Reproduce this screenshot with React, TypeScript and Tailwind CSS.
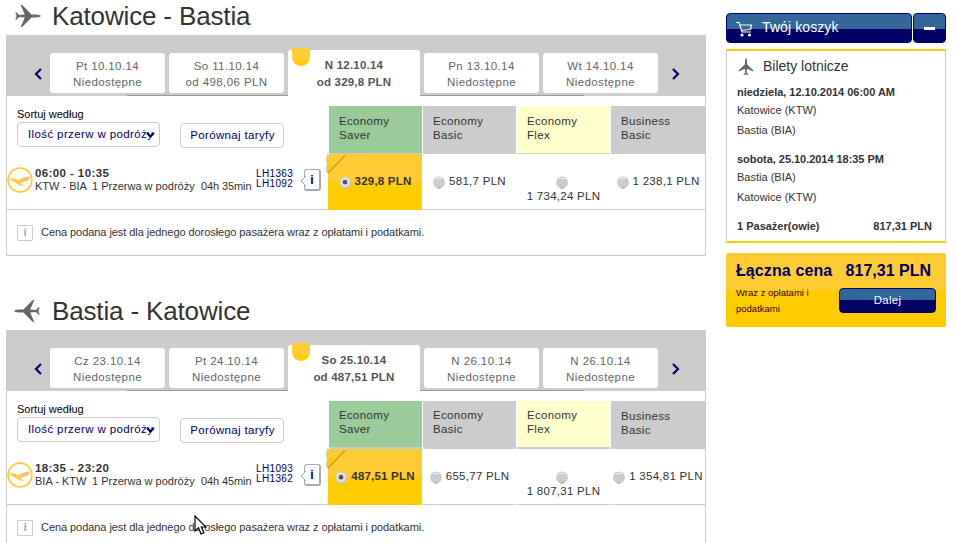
import React from 'react';
import clsx from 'clsx';

type Fare = { price: string; stacked?: boolean };

type Flight = {
  title: string;
  reverse?: boolean;
  days: string[][];
  time: string;
  route: string;
  duration: string;
  numbers: string[];
  fares: Fare[];
};

const flights: Flight[] = [
  {
    title: 'Katowice - Bastia',
    days: [
      ['Pt 10.10.14', 'Niedostępne'],
      ['So 11.10.14', 'od 498,06 PLN'],
      ['N 12.10.14', 'od 329,8 PLN'],
      ['Pn 13.10.14', 'Niedostępne'],
      ['Wt 14.10.14', 'Niedostępne'],
    ],
    time: '06:00 - 10:35',
    route: 'KTW - BIA',
    duration: '04h 35min',
    numbers: ['LH1363', 'LH1092'],
    fares: [{ price: '329,8 PLN' }, { price: '581,7 PLN' }, { price: '1 734,24 PLN', stacked: true }, { price: '1 238,1 PLN' }],
  },
  {
    title: 'Bastia - Katowice',
    reverse: true,
    days: [
      ['Cz 23.10.14', 'Niedostępne'],
      ['Pt 24.10.14', 'Niedostępne'],
      ['So 25.10.14', 'od 487,51 PLN'],
      ['N 26.10.14', 'Niedostępne'],
      ['N 26.10.14', 'Niedostępne'],
    ],
    time: '18:35 - 23:20',
    route: 'BIA - KTW',
    duration: '04h 45min',
    numbers: ['LH1093', 'LH1362'],
    fares: [{ price: '487,51 PLN' }, { price: '655,77 PLN' }, { price: '1 807,31 PLN', stacked: true }, { price: '1 354,81 PLN' }],
  },
];

const classes = [
  { name: 'Economy', kind: 'Saver', color: 'bg-[#99cc99]' },
  { name: 'Economy', kind: 'Basic', color: 'bg-[#cccccc]' },
  { name: 'Economy', kind: 'Flex', color: 'bg-[#ffffcc]' },
  { name: 'Business', kind: 'Basic', color: 'bg-[#cccccc]' },
];

function Plane({ className }: { className?: string }) {
  return (
    <svg viewBox="0 0 27 24" className={className} fill="#666">
      <path d="M27 12c-.5-.8-2.500-1.400-4.500-1.500h-5L9.200 2 7.500.7 6.700 1l4.100 9.400-5.600.7-3-2.800-1 .1 1.600 3.200L1 12l1.800.4-1.600 3.200 1 .1 3-2.800 5.600.7L6.700 23l.8.3L9.200 22l8.300-8.500h5c2-.1 4-.7 4.500-1.500z" />
    </svg>
  );
}

function Arrow({ right }: { right?: boolean }) {
  return (
    <svg viewBox="0 0 8 12" className="h-3 w-2 shrink-0" fill="none" stroke="#000066" strokeWidth="2.2">
      <path d={right ? 'M1 1l5 5-5 5' : 'M7 1L2 6l5 5'} />
    </svg>
  );
}

function Crane() {
  return (
    <svg viewBox="0 0 26 26" className="h-[26px] w-[26px] shrink-0">
      <circle cx="13" cy="13" r="11.900" fill="#fff" stroke="#fc3" strokeWidth="1.700" />
      <path d="M3 11c4 .2 6 1.400 9 2.100 3-2.300 6-3.700 11.500-3.600l-1.200 2.500-2.300 1.900-3.500 1.100-2.800.4c-.5 1 .5 2 4 4-4.500 0-7-2-9-3.700C6.200 14.900 4 13.300 3 11z" fill="#fc3" />
      <path d="M14 12.800c3-1.900 5-2.900 9-2.900l-1 2-2 1.500-4 .8z" fill="#fdb98a" />
    </svg>
  );
}

function Radio({ checked }: { checked?: boolean }) {
  return (
    <svg viewBox="0 0 12 13" className="mr-1 inline-block h-[13px] w-3 align-[-4px]">
      {checked && <circle cx="6" cy="7" r="5.800" fill="#f93" />}
      <circle cx="6" cy="6.400" r="6" fill="#ccc" />
      {checked ? (
        <>
          <circle cx="6" cy="6.200" r="4.600" fill="#e4e4e4" />
          <circle cx="6" cy="6.200" r="2.400" fill="#555" />
        </>
      ) : (
        <>
          <path d="M3 2.500h6" stroke="#fff" strokeOpacity=".7" />
          <path d="M4.500 12h3" stroke="#999" />
        </>
      )}
    </svg>
  );
}

function DayTab({ day, active }: { day: string[]; active?: boolean }) {
  if (active) {
    return (
      <div className="relative h-[45px] w-[132px] shrink-0 rounded-t-[3px] bg-white pt-[7px] text-center text-[11.5px] leading-[17px] font-bold tracking-[0.2px] text-[#555]">
        <div className="absolute top-[-2px] left-1 h-[18px] w-[18px] rounded-b-full bg-linear-to-b from-[#ffcc33] from-65% to-[#ffcc00] to-65%" />
        {day.map((line) => <div key={line}>{line}</div>)}
      </div>
    );
  }
  return (
    <div className="mt-[3px] h-10 w-[115px] shrink-0 rounded-[3px] bg-white pt-[5px] text-center text-[11.5px] leading-4 tracking-[0.4px] text-[#666]">
      {day.map((line) => <div key={line}>{line}</div>)}
    </div>
  );
}

function FareCell({ fare, selected }: { fare: Fare; selected?: boolean }) {
  return (
    <div
      className={clsx(
        'relative h-14 border-b pt-5 text-center leading-[15px] whitespace-nowrap',
        selected
          ? '-ml-px border-[#ffcc00] bg-linear-to-b from-[#ffcc33] from-50% to-[#ffcc00] to-50% text-[11.5px] font-bold tracking-[0.2px]'
          : 'border-[#ccc] text-[11.5px] tracking-[0.27px]',
      )}
    >
      {selected && (
        <svg viewBox="0 0 20 21" className="absolute top-0 left-[-2px] h-[21px] w-5">
          <path d="M1 0h18L1 19z" fill="#fc3" />
          <path d="M1 10h8l-8 9z" fill="#fc0" />
          <path d="M.5 3v6M.5 12v6" stroke="#ccc" />
          <path d="M19 1.500L2 19" stroke="#c93" strokeWidth="1.500" />
        </svg>
      )}
      <Radio checked={selected} />
      {fare.stacked ? <div>{fare.price}</div> : <span>{fare.price}</span>}
    </div>
  );
}

function FlightSection({ flight }: { flight: Flight }) {
  return (
    <section className="h-[295px]">
      <h2 className="flex h-[35px] items-start pl-2 text-[26px] leading-8 tracking-[-0.15px] text-[#333]">
        <Plane className={clsx('mt-1 mr-[11px] h-6 w-[27px]', flight.reverse && '-scale-x-100')} />
        {flight.title}
      </h2>
      <div className="h-[221px] w-[700px] border-x border-b border-[#ccc]">
        <div className="-mx-px flex h-[60px] bg-[#ccc] pt-[15px]">
          <div className="flex w-11 items-center justify-end pt-[3px] pr-2">
            <Arrow />
          </div>
          <div className="flex gap-1">
            {flight.days.map((day, i) => <DayTab key={i} day={day} active={i === 2} />)}
          </div>
          <div className="flex items-center pt-[3px] pl-[14px]">
            <Arrow right />
          </div>
        </div>
        {/* Shadow under the inactive tabs, open below the active one */}
        <div className="-mx-px flex h-px bg-[#ccc] pl-[121px]">
          <div className="w-[161px] bg-[#999]" />
          <div className="w-[132px] bg-white" />
          <div className="w-[164px] bg-[#999]" />
        </div>

        <div className="flex">
          <div className="w-[322px]">
            <div className="flex h-[57px] pl-[10px] text-[#000066]">
              <div className="w-[163px] pt-3">
                <div className="h-[14px] text-[11px] leading-[13px] text-black">Sortuj według</div>
                <div className="relative flex h-[25px] w-[143px] items-center rounded-[4px] border border-[#ccc] pl-[10px] text-[11.5px] tracking-[0.38px] whitespace-nowrap">
                  Ilość przerw w podróży
                  <svg viewBox="0 0 9 6" className="absolute top-[9px] right-1 h-[6px] w-[9px]" fill="none" stroke="#000066" strokeWidth="2">
                    <path d="M1 1l3.500 3.500L8 1" />
                  </svg>
                </div>
              </div>
              <button className="mt-[27px] h-[25px] w-[104px] rounded-[4px] border border-[#ccc] pl-px text-[11.5px] tracking-[0.35px] whitespace-nowrap">
                Porównaj taryfy
              </button>
            </div>
            <div className="flex h-[57px] border-b border-[#ccc] text-[11px] text-[#333]">
              <div className="mt-[14px]">
                <Crane />
              </div>
              <div className="mt-[14px] ml-[2px] w-[221px] leading-[13px] whitespace-nowrap">
                <div className="text-[11.5px] font-bold tracking-[0.4px]">{flight.time}</div>
                <div className="flex">
                  <span className="w-[57px]">{flight.route}</span>
                  <span className="w-[109px]">1 Przerwa w podróży</span>
                  <span className="tracking-[-0.1px]">{flight.duration}</span>
                </div>
              </div>
              <div className="mt-4 w-11 text-[10px] leading-[10px] tracking-[0.35px] text-[#000066]">
                {flight.numbers.map((n) => <div key={n}>{n}</div>)}
              </div>
              <div className="relative mt-4 ml-1 h-[22px] w-[17px] rounded-[3px] border border-r-2 border-b-2 border-[#aaa] text-center text-[12px] leading-5 font-bold text-[#000066]">
                i
                <svg viewBox="0 0 6 10" className="absolute top-[6px] left-[-5px] h-[10px] w-[6px]">
                  <path d="M6 0L1 5l5 5" fill="#fff" stroke="#aaa" />
                </svg>
              </div>
            </div>
          </div>

          <div className="mt-[10px] grid h-[104px] w-[376px] grid-cols-[93px_93px_93px_94px] gap-x-px">
            {classes.map((c, i) => (
              <div
                key={i}
                className={clsx(
                  'h-12 border-b border-[#ccc] pl-[10px] text-[11.5px] leading-[14px] tracking-[0.35px] text-[#333]',
                  flight.reverse && i < 3 ? 'border-b-2 pt-[7px]' : 'pt-2',
                  c.color,
                )}
              >
                {c.name}
                <br />
                {c.kind}
              </div>
            ))}
            {flight.fares.map((fare, i) => (
              <div key={i} className="text-[#333]">
                <FareCell fare={fare} selected={i === 0} />
              </div>
            ))}
          </div>
        </div>

        <div className="flex h-[45px] items-center pl-[10px] text-[11px] tracking-[-0.06px] text-[#333]">
          <div className="mr-2 h-4 w-4 rounded-[1px] border border-[#ccc] text-center text-[10px] leading-[14px] font-bold text-[#999]">i</div>
          Cena podana jest dla jednego dorosłego pasażera wraz z opłatami i podatkami.
        </div>
      </div>
    </section>
  );
}

function Basket() {
  return (
    <aside className="w-[220px] pt-[13px] text-[11px] text-[#333]">
      <div className="flex h-[30px] gap-px text-white">
        <div className="flex w-[186px] items-center rounded-[4px] border border-[#000066] bg-linear-to-b from-[#336699] from-54% to-[#000066] to-54% pl-[9px] text-[14px]">
          <svg viewBox="0 0 17 16" className="mt-px mr-[9px] h-4 w-[17px]" fill="none" stroke="#fff" strokeWidth="1.200">
            <path d="M0 1.500h3l3 9.500h9M4 4h11.500l-1 4.500-9 .8" />
            <circle cx="6" cy="14" r="1" fill="#fff" />
            <circle cx="13.500" cy="14" r="1" fill="#fff" />
          </svg>
          <span className="-mt-[2px] tracking-[0.1px]">Twój koszyk</span>
        </div>
        <div className="flex w-[33px] items-center justify-center rounded-[4px] border border-[#000066] bg-linear-to-b from-[#336699] from-54% to-[#000066] to-54%">
          <div className="mt-px h-[3px] w-[11px] bg-white" />
        </div>
      </div>

      <div className="mt-[6px] h-[194px] border-x border-y-2 border-x-[#ccc] border-y-[#ffcc00] pr-[13px] pl-[10px]">
        <div className="flex h-[31px] items-center text-[14px]">
          <Plane className="mr-[8px] h-[16px] w-[18px] -rotate-90" />
          Bilety lotnicze
        </div>
        <div className="leading-5">
          <div className="h-[18px] font-bold tracking-[-0.02px]">niedziela, 12.10.2014 06:00 AM</div>
          <div>Katowice (KTW)</div>
          <div>Bastia (BIA)</div>
          <div className="mt-[9px] h-[18px] font-bold tracking-[-0.04px]">sobota, 25.10.2014 18:35 PM</div>
          <div>Bastia (BIA)</div>
          <div>Katowice (KTW)</div>
          <div className="mt-[9px] flex justify-between font-bold">
            <span>1 Pasażer(owie)</span>
            <span>817,31 PLN</span>
          </div>
        </div>
      </div>

      <div className="mt-[10px] h-[74px] rounded-[2px] bg-linear-to-b from-[#ffcc33] from-50% to-[#ffcc00] to-50% px-[10px] pt-2 text-[#000066]">
        <div className="flex justify-between pr-[5px] text-[16px] leading-5 font-bold whitespace-nowrap">
          <span className="tracking-[0.1px]">Łączna cena</span>
          <span>817,31 PLN</span>
        </div>
        <div className="flex justify-between">
          <div className="pt-1 text-[9.500px] leading-4 text-[#330033]">
            Wraz z opłatami i
            <br />
            podatkami
          </div>
          <button className="mt-[7px] h-[25px] w-[97px] rounded-[4px] border border-[#000066] bg-linear-to-b from-[#336699] from-50% to-[#000066] to-50% text-[11.5px] tracking-[0.3px] text-white">
            Dalej
          </button>
        </div>
      </div>
    </aside>
  );
}

export default function App() {
  return (
    <div className="relative flex h-[543px] w-[955px] gap-5 overflow-hidden bg-white pl-[6px] font-['Liberation_Sans',Arial,sans-serif]">
      <main className="w-[700px]">
        {flights.map((flight) => <FlightSection key={flight.title} flight={flight} />)}
      </main>
      <Basket />
      {/* Mouse pointer */}
      <svg viewBox="0 0 13 20" className="absolute top-[515px] left-[194px] h-5 w-[13px]">
        <path d="M1 1v15l3.500-3.300L7 19l3-1.300-2.700-5.700H12z" fill="#fff" stroke="#000" strokeWidth="1.200" />
      </svg>
    </div>
  );
}
